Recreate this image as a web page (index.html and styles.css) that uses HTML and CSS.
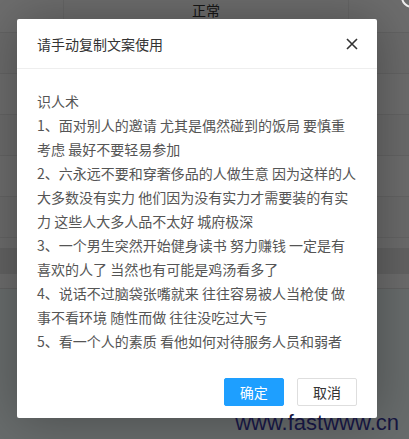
FILE: index.html
```html
<!DOCTYPE html>
<html lang="zh-CN">
<head>
  <meta charset="UTF-8" />
  <meta name="viewport" content="width=device-width, initial-scale=1.0"/>
  <title>复制文案</title>
  <link rel="stylesheet" href="styles.css">
</head>
<body>

  <div class="table">
    <div class="row row-head">
      <div class="cell cell-side"></div>
      <div class="cell cell-main">正常</div>
      <div class="cell cell-side"></div>
    </div>
    <div class="row"><div class="cell cell-side"></div><div class="cell cell-main"></div><div class="cell cell-side"></div></div>
    <div class="row row-alt"><div class="cell cell-side"></div><div class="cell cell-main"></div><div class="cell cell-side"></div></div>
    <div class="row"><div class="cell cell-side"></div><div class="cell cell-main"></div><div class="cell cell-side"></div></div>
    <div class="row row-alt"><div class="cell cell-side"></div><div class="cell cell-main"></div><div class="cell cell-side"></div></div>
    <div class="row"><div class="cell cell-side"></div><div class="cell cell-main"></div><div class="cell cell-side"></div></div>
    <div class="row row-thin"></div>
    <div class="row row-dark"></div>
    <div class="row row-light"></div>
    <div class="row row-rest"></div>
  </div>

  <div class="shade"></div>
  <span class="corner-ring"></span>

  <div class="dialog">
    <div class="dialog-title">
      <span>请手动复制文案使用</span>
      <span class="dialog-close">
        <svg width="12" height="12" viewBox="0 0 12 12">
          <path d="M1 1 L11 11 M11 1 L1 11" stroke="#333" stroke-width="1.6" fill="none"/>
        </svg>
      </span>
    </div>
    <div class="dialog-body">
      识人术<br>
      1、面对别人的邀请 尤其是偶然碰到的饭局 要慎重考虑 最好不要轻易参加<br>
      2、六永远不要和穿奢侈品的人做生意 因为这样的人大多数没有实力 他们因为没有实力才需要装的有实力 这些人大多人品不太好 城府极深<br>
      3、一个男生突然开始健身读书 努力赚钱 一定是有喜欢的人了 当然也有可能是鸡汤看多了<br>
      4、说话不过脑袋张嘴就来 往往容易被人当枪使 做事不看环境 随性而做 往往没吃过大亏<br>
      5、看一个人的素质 看他如何对待服务人员和弱者
    </div>
    <div class="dialog-btns">
      <a href="#" class="btn btn-ok">确定</a>
      <a href="#" class="btn">取消</a>
    </div>
  </div>

  <div class="watermark">www.fastwww.cn</div>

</body>
</html>
```

FILE: styles.css
```css
* {
  margin: 0;
  padding: 0;
  box-sizing: border-box;
}

body {
  font-family: "Noto Sans CJK SC", sans-serif;
  font-size: 14px;
  width: 409px;
  height: 439px;
  overflow: hidden;
  position: relative;
  background-color: #f2fafa;
}

/* table behind the shade */
.table {
  display: flex;
  flex-direction: column;
}

.row {
  display: flex;
  height: 41px;
  background-color: #f6f6f6;
  border-bottom: 1px solid #e6e6e6;
}

.row-head {
  height: 33px;
  background-color: #fdfdfd;
}

.row-alt {
  background-color: #fafafa;
}

.row-thin {
  height: 10px;
  background-color: #f8f8f8;
  border-bottom: none;
}

.row-dark {
  height: 26px;
  background-color: #e4e4e4;
  border-bottom: none;
}

.row-light {
  height: 15px;
  background-color: #fbfbfb;
  border-bottom: 1px solid #e2e2e2;
}

.row-rest {
  height: 160px;
  background-color: #f2fafa;
  border-bottom: none;
}

.cell {
  height: 100%;
}

.cell-side {
  width: 63px;
}

.cell-side:last-child {
  width: 61px;
  border-left: 1px solid #ececec;
}

.cell-main {
  flex: 1;
  border-left: 1px solid #ececec;
  text-align: center;
  color: #333;
  line-height: 20px;
}

.shade {
  position: absolute;
  inset: 0;
  background-color: rgba(0, 0, 0, 0.57);
}

.corner-ring {
  position: absolute;
  left: 401px;
  top: -14px;
  width: 22px;
  height: 22px;
  border: 2px solid rgba(255, 255, 255, 0.9);
  border-radius: 50%;
}

/* dialog */
.dialog {
  position: absolute;
  left: 17px;
  top: 19px;
  width: 360px;
  background-color: #fff;
  border-radius: 2px;
  box-shadow: 1px 1px 50px rgba(0, 0, 0, 0.3);
}

.dialog-title {
  height: 50px;
  padding: 0 20px;
  display: flex;
  justify-content: space-between;
  align-items: center;
  border-bottom: 1px solid #eee;
  color: #333;
}

.dialog-close {
  display: flex;
  margin-right: -1px;
}

.dialog-body {
  padding: 20px;
  line-height: 24px;
  color: #555;
}

.dialog-btns {
  padding: 0 15px 12px;
  text-align: right;
}

.btn {
  display: inline-block;
  height: 28px;
  line-height: 26px;
  padding: 0 15px;
  margin: 5px 5px 0;
  border: 1px solid #dedede;
  border-radius: 2px;
  background-color: #fff;
  color: #333;
  text-decoration: none;
  vertical-align: top;
}

.btn-ok {
  border-color: #1e9fff;
  background-color: #1e9fff;
  color: #fff;
}

.watermark {
  position: absolute;
  right: 10px;
  top: 412px;
  font-family: "Liberation Sans", Arial, sans-serif;
  font-size: 22px;
  line-height: 22px;
  color: #15153f;
}
```
